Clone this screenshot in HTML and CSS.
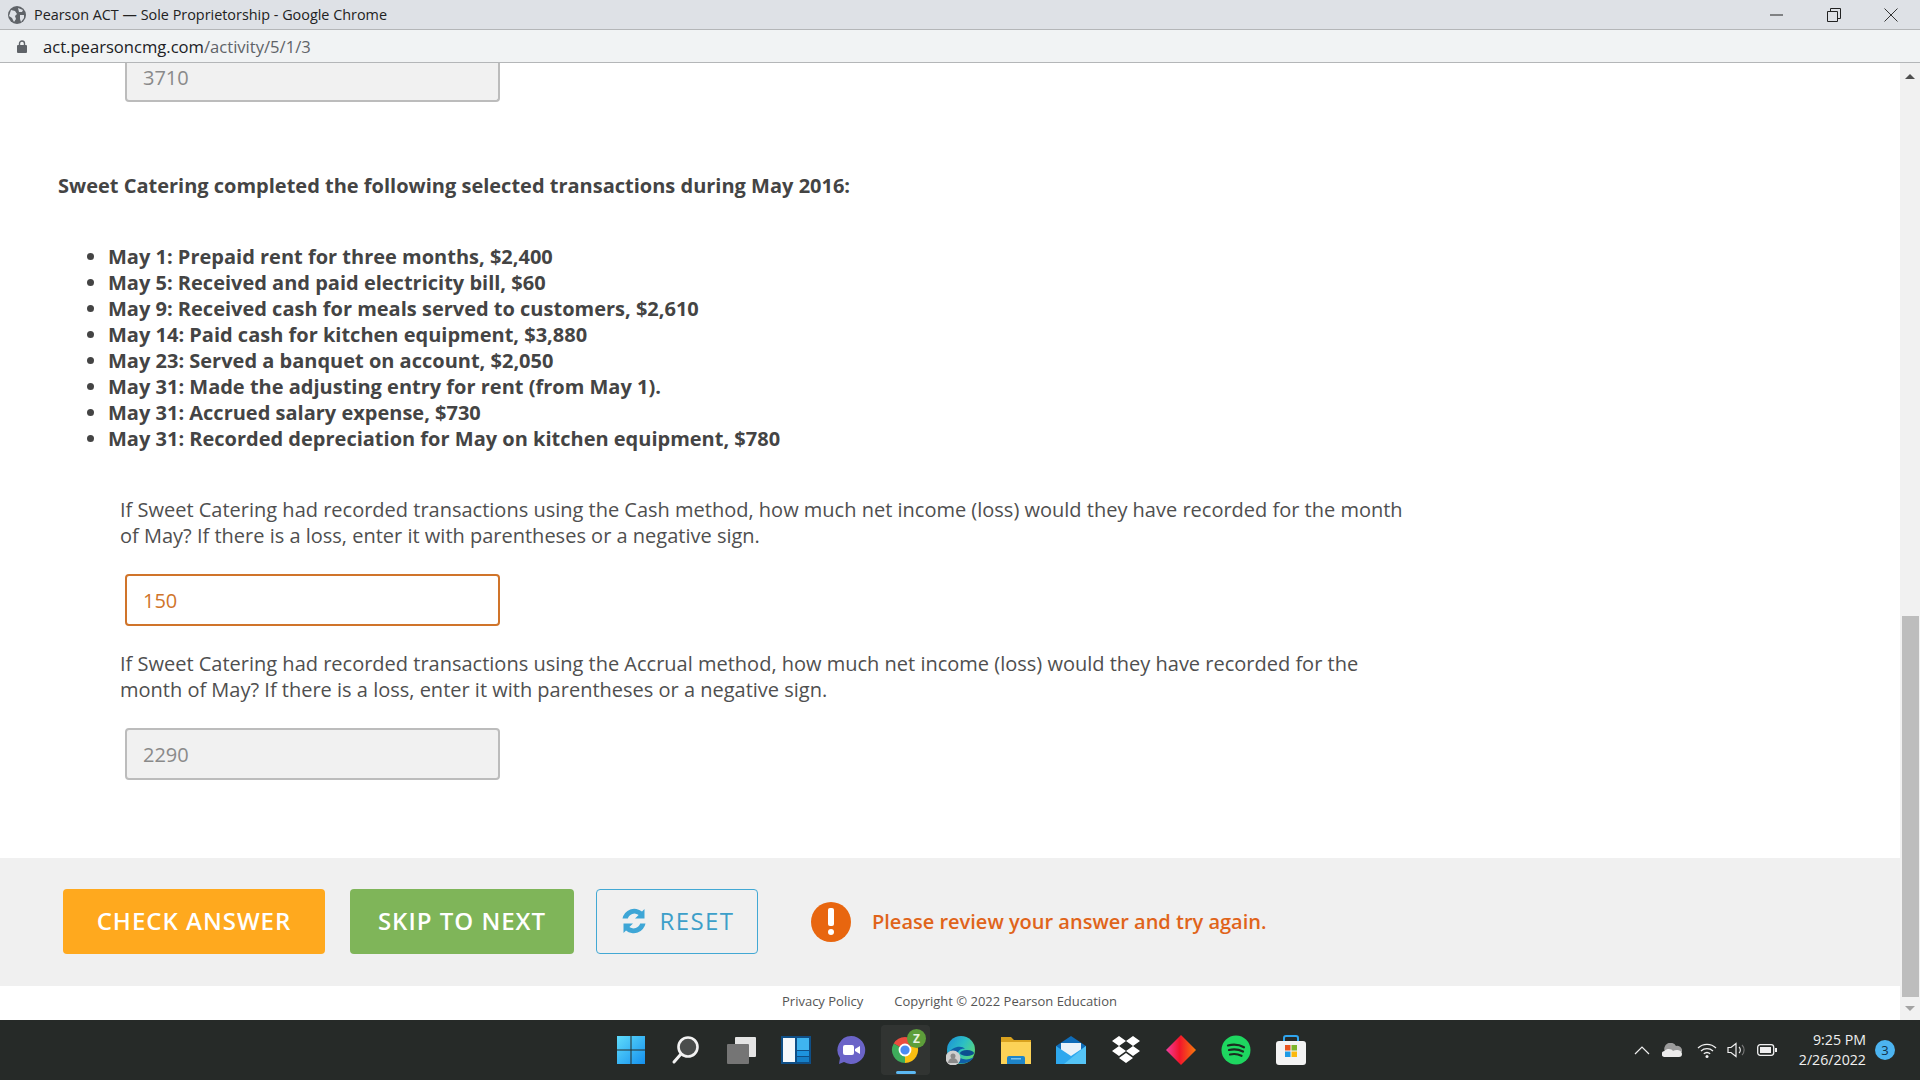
FILE: index.html
```html
<!DOCTYPE html>
<html lang="en">
<head>
  <title>Pearson ACT — Sole Proprietorship - Google Chrome</title>
  <link rel="stylesheet" href="styles.css">
</head>
<body>

  <div class="title-bar">
    <svg class="globe" width="18" height="18" viewBox="0 0 18 18">
      <circle cx="9" cy="9" r="9" fill="#5f6368"/>
      <path d="M3 4l4 1 2 3-2 2 1 3-2 3-2-4-3-2zM10 2l5 2-1 2-3 0zM12 9l4 0 0 3-3 4-1-3z" fill="#dee1e6"/>
    </svg>
    <span class="window-title">Pearson ACT — Sole Proprietorship - Google Chrome</span>
    <div class="window-controls">
      <svg width="14" height="14" viewBox="0 0 14 14"><path d="M0 7h13" stroke="#222" stroke-width="1"/></svg>
      <svg width="14" height="14" viewBox="0 0 14 14"><path d="M.5 3.500h10v10H.5zM3.500 3.500V.5h10v10h-3" fill="none" stroke="#222" stroke-width="1"/></svg>
      <svg width="14" height="14" viewBox="0 0 14 14"><path d="M.5.5l13 13M13.500.5l-13 13" stroke="#333" stroke-width="1"/></svg>
    </div>
  </div>

  <div class="address-bar">
    <svg width="10" height="13" viewBox="0 0 10 13"><path d="M2.500 5V3.500a2.500 2.500 0 0 1 5 0V5" fill="none" stroke="#5f6368" stroke-width="1.400"/><rect y="5" width="10" height="8" rx="1" fill="#5f6368"/></svg>
    <span class="url">act.pearsoncmg.com<span class="url-path">/activity/5/1/3</span></span>
  </div>

  <div class="viewport">
    <div class="page">
      <div class="content">
        <div class="field field-cut">3710</div>

        <p class="intro">Sweet Catering completed the following selected transactions during May 2016:</p>

        <ul class="transactions">
          <li>May 1: Prepaid rent for three months, $2,400</li>
          <li>May 5: Received and paid electricity bill, $60</li>
          <li>May 9: Received cash for meals served to customers, $2,610</li>
          <li>May 14: Paid cash for kitchen equipment, $3,880</li>
          <li>May 23: Served a banquet on account, $2,050</li>
          <li>May 31: Made the adjusting entry for rent (from May 1).</li>
          <li>May 31: Accrued salary expense, $730</li>
          <li>May 31: Recorded depreciation for May on kitchen equipment, $780</li>
        </ul>

        <p class="question first">If Sweet Catering had recorded transactions using the Cash method, how much net income (loss) would they have recorded for the month of May? If there is a loss, enter it with parentheses or a negative sign.</p>
        <div class="field field-wrong">150</div>

        <p class="question">If Sweet Catering had recorded transactions using the Accrual method, how much net income (loss) would they have recorded for the month of May? If there is a loss, enter it with parentheses or a negative sign.</p>
        <div class="field">2290</div>
      </div>

      <div class="actions">
        <button class="btn btn-check">CHECK ANSWER</button>
        <button class="btn btn-skip">SKIP TO NEXT</button>
        <button class="btn btn-reset">
          <svg width="28" height="28" viewBox="0 0 28 28"><path d="M24.500 2v9.500H15l3.600-3.600A7 7 0 0 0 7.800 11.500H2.500A12 12 0 0 1 22 4.500zM3.500 26v-9.500H13l-3.600 3.600A7 7 0 0 0 20.200 16.500h5.300A12 12 0 0 1 6 23.500z" fill="#3ea6d6"/></svg>
          RESET
        </button>
        <div class="feedback">
          <span class="feedback-icon"><span class="bang"></span><span class="dot"></span></span>
          <span>Please review your answer and try again.</span>
        </div>
      </div>

      <div class="page-footer">
        <span>Privacy Policy</span>
        <span>Copyright © 2022 Pearson Education</span>
      </div>
    </div>

    <div class="scrollbar">
      <span class="arrow-up"></span>
      <div class="scroll-track"><div class="scroll-thumb"></div></div>
      <span class="arrow-down"></span>
    </div>
  </div>

  <div class="taskbar">
    <div class="task-icons">
      <svg width="30" height="30" viewBox="0 0 30 30"><defs><linearGradient id="win" x1="0" y1="0" x2="1" y2="1"><stop offset="0" stop-color="#5fdcfb"/><stop offset="1" stop-color="#1590ee"/></linearGradient></defs><path d="M1 1h13.500v13.500H1zM15.500 1H29v13.500H15.500zM1 15.500h13.500V29H1zM15.500 15.500H29V29H15.500z" fill="url(#win)"/></svg>
      <svg width="30" height="30" viewBox="0 0 30 30"><circle cx="17" cy="12" r="9.500" fill="#4a4d4c" stroke="#f2f2f2" stroke-width="2.600"/><path d="M10 19l-7 8" stroke="#f2f2f2" stroke-width="3" stroke-linecap="round"/></svg>
      <svg width="30" height="30" viewBox="0 0 30 30"><rect x="9" y="2" width="21" height="20" rx="1" fill="#e4e4e4"/><rect x="1" y="9" width="22" height="20" rx="1" fill="#757575"/></svg>
      <svg width="30" height="30" viewBox="0 0 30 30"><rect x="0" y="1" width="30" height="28" fill="#0f4f87"/><rect x="2" y="3" width="12" height="24" fill="#f4f8fb"/><rect x="16" y="3" width="12" height="12" fill="#3fb4ef"/><rect x="16" y="16" width="12" height="5" fill="#1d93de"/><rect x="16" y="22" width="12" height="5" fill="#1680c8"/></svg>
      <svg width="30" height="30" viewBox="0 0 30 30"><path d="M15 1a14 14 0 1 1-7 26l-5 2 1-6A14 14 0 0 1 15 1z" fill="#6b64c8"/><rect x="7" y="10" width="11" height="10" rx="2" fill="#fff"/><path d="M19 14l5-3v8l-5-3z" fill="#fff"/></svg>
      <div class="chrome-slot">
        <svg width="30" height="30" viewBox="0 0 30 30"><path d="M14 15L2.740 8.500A13 13 0 0 1 25.260 8.500z" fill="#ea4335"/><path d="M14 15l11.260-6.500A13 13 0 0 1 14 28z" fill="#fbbc05"/><path d="M14 15v13A13 13 0 0 1 2.740 8.500z" fill="#34a853"/><circle cx="14" cy="15" r="5.500" fill="#4285f4" stroke="#fff" stroke-width="1.800"/></svg>
        <span class="chrome-badge">Z</span>
        <span class="active-line"></span>
      </div>
      <svg width="30" height="30" viewBox="0 0 30 30"><defs><linearGradient id="edge" x1="0" y1="0" x2="1" y2=".6"><stop offset="0" stop-color="#1a8cd8"/><stop offset=".55" stop-color="#2cbfc4"/><stop offset="1" stop-color="#5ad67c"/></linearGradient></defs><circle cx="15" cy="15" r="14" fill="url(#edge)"/><path d="M2 19c3 11 20 13 26 3-6 4-15 3-16-3-.5-3 3-6 7-5-3-4-13-3-17 5z" fill="#0f5fa8"/><ellipse cx="21" cy="18" rx="7" ry="3" fill="#0c4f90"/><circle cx="7" cy="23" r="7.500" fill="#cfcfcf"/><circle cx="7" cy="21" r="2.500" fill="#8a8a8a"/><path d="M2 28a5 5 0 0 1 10 0z" fill="#8a8a8a"/></svg>
      <svg width="30" height="30" viewBox="0 0 30 30"><path d="M0 2h10l3 3h17v24H0z" fill="#d9a21f"/><rect y="7" width="30" height="22" fill="#fcd257"/><path d="M8 21h14a2 2 0 0 1 2 2v6H6v-6a2 2 0 0 1 2-2z" fill="#1e85c9"/><rect x="10" y="23" width="10" height="1.500" fill="#7cc4ee"/></svg>
      <svg width="30" height="30" viewBox="0 0 30 30"><path d="M0 11L15 1l15 10v18H0z" fill="#0f6cb8"/><path d="M5 8h20v9l-10 5-10-5z" fill="#e9f2f9"/><path d="M0 11l15 10 15-10v18H0z" fill="#2ea8ee"/><path d="M30 11v18H8z" fill="#55c4f6"/></svg>
      <svg width="30" height="30" viewBox="0 0 30 30"><path d="M8 1l7 5-7 5-7-5zM22 1l7 5-7 5-7-5zM8 11l7 5-7 5-7-5zM22 11l7 5-7 5-7-5zM15 18l7 5-7 5-7-5z" fill="#fff"/></svg>
      <svg width="30" height="30" viewBox="0 0 30 30"><defs><linearGradient id="dia" x1="0" y1="0" x2="1" y2="0"><stop offset="0" stop-color="#ef3fa0"/><stop offset=".45" stop-color="#f3142c"/><stop offset="1" stop-color="#f77a0c"/></linearGradient></defs><path d="M15 0l15 15-15 15L0 15z" fill="url(#dia)"/></svg>
      <svg width="30" height="30" viewBox="0 0 30 30"><circle cx="15" cy="15" r="14.500" fill="#1ed760"/><path d="M7 10.500c6-1.500 11-1 16 1.800M8 15c5-1.200 9.500-.8 14 1.500M9 19.500c4-.9 7.800-.6 11.500 1.300" fill="none" stroke="#1b2b20" stroke-width="2.200" stroke-linecap="round"/></svg>
      <svg width="30" height="30" viewBox="0 0 30 30"><path d="M8 6V3a2 2 0 0 1 2-2h10a2 2 0 0 1 2 2v3" fill="none" stroke="#2fa4ee" stroke-width="2"/><rect y="6" width="30" height="24" rx="3" fill="#f3f3f3"/><rect x="9" y="10" width="5.500" height="5.500" fill="#e8541f"/><rect x="15.500" y="10" width="5.500" height="5.500" fill="#7db52a"/><rect x="9" y="16.500" width="5.500" height="5.500" fill="#1d9be6"/><rect x="15.500" y="16.500" width="5.500" height="5.500" fill="#fbb90e"/></svg>
    </div>

    <div class="tray">
      <svg class="tray-chevron" width="16" height="9" viewBox="0 0 16 9"><path d="M1 8l7-7 7 7" fill="none" stroke="#f0f0f0" stroke-width="1.200"/></svg>
      <svg class="tray-cloud" width="20" height="14" viewBox="0 0 20 14"><path d="M3 9a6 6 0 0 1 11-6 5 5 0 0 1 6 6z" fill="#9b9b9b"/><path d="M3 14a3 3 0 0 1-.5-6C5 5 10 6 11 8c3-2 9-1 9 3a3 3 0 0 1-3 3z" fill="#ececec"/></svg>
      <svg width="20" height="15" viewBox="0 0 20 15"><path d="M1 5a13 13 0 0 1 18 0M4 8a9 9 0 0 1 12 0M6.800 10.800a5 5 0 0 1 6.400 0" fill="none" stroke="#f0f0f0" stroke-width="1.300"/><circle cx="10" cy="13.500" r="1.500" fill="#f0f0f0"/></svg>
      <svg width="20" height="16" viewBox="0 0 20 16"><path d="M1 5.500h3L9 1.500v13L4 10.500H1z" fill="none" stroke="#f0f0f0" stroke-width="1.200"/><path d="M12 5a4 4 0 0 1 0 6" fill="none" stroke="#f0f0f0" stroke-width="1.100"/><path d="M15 3a7 7 0 0 1 0 10" fill="none" stroke="#777" stroke-width="1.100"/></svg>
      <svg width="20" height="12" viewBox="0 0 20 12"><rect x=".7" y=".7" width="16" height="10.600" rx="2.500" fill="none" stroke="#f0f0f0" stroke-width="1.300"/><rect x="3" y="3" width="11" height="6" fill="#f0f0f0"/><rect x="18" y="4" width="2" height="4" fill="#f0f0f0"/></svg>
      <div class="clock">
        <span>9:25 PM</span>
        <span>2/26/2022</span>
      </div>
      <span class="notify">3</span>
    </div>
  </div>

</body>
</html>
```

FILE: styles.css
```css
* { box-sizing: border-box; margin: 0; padding: 0; }
body {
  font-family: "Open Sans", sans-serif;
  background-color: #fff;
  width: 1920px;
  height: 1080px;
  overflow: hidden;
  display: flex;
  flex-direction: column;
}

/* browser chrome */
.title-bar {
  height: 30px;
  display: flex;
  align-items: center;
  background-color: #dee1e6;
  border-bottom: 1px solid #b4b6b8;
  padding-left: 8px;
}
.window-title { margin-left: 8px; font-size: 14.4px; color: #222; }
.window-controls {
  margin-left: auto;
  display: flex;
  gap: 43px;
  padding-right: 22px;
}
.address-bar {
  height: 33px;
  display: flex;
  align-items: center;
  background-color: #f1f3f4;
  border-bottom: 1px solid #b4b6b8;
  padding-left: 17px;
}
.url { margin-left: 16px; font-size: 16.6px; color: #202124; }
.url-path { color: #5f6368; }

/* page */
.viewport { flex: 1; display: flex; min-height: 0; }
.page { flex: 1; display: flex; flex-direction: column; }
.content { flex: 1; padding-left: 57px; color: #444; font-size: 20px; line-height: 26px; }

.field {
  width: 375px;
  height: 52px;
  margin-left: 68px;
  padding: 1px 0 0 16px;
  display: flex;
  align-items: center;
  font-size: 20px;
  color: #8a8a8a;
  background-color: #f1f1f1;
  border: 2px solid #bcbcbc;
  border-radius: 4px;
}
.field-cut { height: 39px; border-top: none; border-radius: 0 0 4px 4px; padding: 0 0 7px 16px; }
.field-wrong { color: #d0742a; background-color: #fff; border-color: #d0742a; }

.intro { margin: 71px 0 0 1px; font-weight: 700; }
.transactions { margin-top: 45px; padding-left: 51px; font-weight: 700; }
.question { width: 1285px; margin: 25px 0 25px 63px; color: #4f4f4f; }
.question.first { margin-top: 45px; }

.actions {
  height: 128px;
  display: flex;
  align-items: flex-start;
  padding: 31px 0 0 63px;
  background-color: #f0f0f0;
}
.btn {
  height: 65px;
  display: flex;
  align-items: center;
  justify-content: center;
  padding-bottom: 2px;
  border: none;
  border-radius: 4px;
  color: #fff;
  font-family: "Open Sans", sans-serif;
  font-size: 24px;
  font-weight: 600;
  letter-spacing: 1px;
}
.btn-check { width: 262px; background-color: #ffa91e; }
.btn-skip { width: 224px; margin-left: 25px; background-color: #7fb559; }
.btn-reset {
  width: 162px;
  margin-left: 22px;
  gap: 12px;
  background-color: transparent;
  border: 1px solid #42a8d4;
  color: #3d9fc9;
  font-weight: 400;
  letter-spacing: 1.4px;
}
.feedback {
  height: 65px;
  display: flex;
  align-items: center;
  gap: 21px;
  margin-left: 53px;
  font-size: 20px;
  font-weight: 600;
  color: #e0641a;
}
.feedback-icon {
  width: 40px;
  height: 40px;
  border-radius: 50%;
  background-color: #e8660f;
  display: flex;
  flex-direction: column;
  align-items: center;
  justify-content: center;
  gap: 3px;
}
.bang { width: 6px; height: 18px; border-radius: 2px; background-color: #fff; }
.dot { width: 6px; height: 6px; border-radius: 50%; background-color: #fff; }

.page-footer {
  height: 34px;
  display: flex;
  align-items: center;
  gap: 31px;
  padding: 0 0 4px 782px;
  font-size: 13px;
  color: #555;
}

/* scrollbar */
.scrollbar {
  width: 20px;
  display: flex;
  flex-direction: column;
  align-items: center;
  background-color: #f1f1f1;
}
.arrow-up, .arrow-down { width: 0; height: 0; border-left: 5px solid transparent; border-right: 5px solid transparent; }
.arrow-up { margin-top: 11px; border-bottom: 5px solid #505050; }
.arrow-down { margin: 9px 0; border-top: 5px solid #a3a3a3; }
.scroll-track { flex: 1; width: 17px; display: flex; flex-direction: column; justify-content: flex-end; }
.scroll-thumb { height: 381px; background-color: #bdbdbd; }

/* taskbar */
.taskbar {
  height: 60px;
  display: flex;
  align-items: center;
  background-color: #262a28;
  color: #f0f0f0;
}
.task-icons {
  display: flex;
  align-items: center;
  gap: 25px;
  margin-left: 616px;
}
.chrome-slot { width: 30px; height: 30px; position: relative; }
.chrome-badge {
  position: absolute;
  top: -6px;
  right: -5px;
  width: 19px;
  height: 19px;
  border-radius: 50%;
  background-color: #5d9e3a;
  color: #e8f2df;
  font-size: 12px;
  font-weight: 700;
  line-height: 19px;
  text-align: center;
}
.chrome-slot::before {
  content: "";
  position: absolute;
  inset: -10px -9px -10px -10px;
  background-color: rgba(255, 255, 255, 0.05);
  border-radius: 4px;
}
.active-line {
  position: absolute;
  left: 5px;
  bottom: -9px;
  width: 20px;
  height: 3px;
  border-radius: 2px;
  background-color: #5cb8f2;
}
.tray {
  margin-left: auto;
  display: flex;
  align-items: center;
  gap: 10px;
  padding-right: 25px;
}
.tray-chevron { margin-right: 2px; }
.tray-cloud { margin-right: 5px; }
.clock {
  display: flex;
  flex-direction: column;
  align-items: flex-end;
  margin: 0 -1px 0 12px;
  font-size: 14.2px;
  line-height: 20px;
}
.notify {
  width: 20px;
  height: 20px;
  border-radius: 50%;
  background-color: #4cb4f0;
  color: #12324a;
  font-size: 13px;
  line-height: 20px;
  text-align: center;
}
```
